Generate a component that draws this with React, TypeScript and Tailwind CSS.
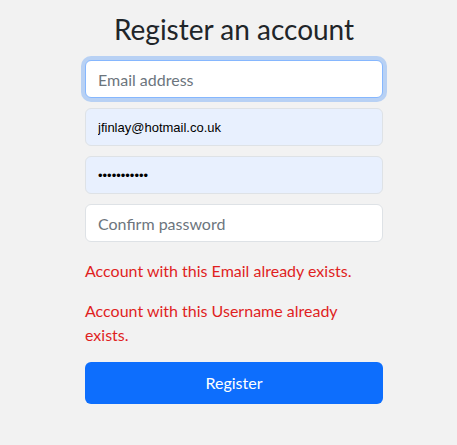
export default function App() {
  return (
    <div className="min-h-screen bg-[#f2f2f2] font-['Lato',sans-serif] text-[#212529]">
      <div className="ml-[85px] w-[298px] pt-[9px]">
        <h1 className="text-center text-[28px] leading-[40px] font-normal mb-[11px] -mx-4">Register an account</h1>
        <form className="flex flex-col gap-[10px]" onSubmit={(e) => e.preventDefault()}>
          <input
            type="email"
            placeholder="Email address"
            autoFocus
            className="h-[38px] w-full rounded-[6px] border border-[#86b7fe] bg-white px-3 text-[16px] shadow-[0_0_0_4px_rgba(13,110,253,0.25)] outline-none placeholder:text-[#6c757d]"
          />
          <input
            type="text"
            defaultValue="jfinlay@hotmail.co.uk"
            className="h-[38px] w-full rounded-[6px] border border-[#dee2e6] bg-[#e8f0fe] px-3 font-['Liberation_Sans',Arial,sans-serif] text-[13px] text-black outline-none"
          />
          <input
            type="password"
            defaultValue="abcdefghijk"
            className="h-[38px] w-full rounded-[6px] border border-[#dee2e6] bg-[#e8f0fe] px-3 font-['Liberation_Sans',Arial,sans-serif] text-[13px] text-black outline-none"
          />
          <input
            type="password"
            placeholder="Confirm password"
            className="h-[38px] w-full rounded-[6px] border border-[#dee2e6] bg-white px-3 text-[16px] outline-none placeholder:text-[#6c757d]"
          />
          <div className="mt-[7px] text-[16px] leading-[24px] text-[#e01f1f]">
            <p className="mb-[16px]">Account with this Email already exists.</p>
            <p>Account with this Username already exists.</p>
          </div>
          <button
            type="submit"
            className="mt-[5px] h-[42px] w-full rounded-[6px] bg-[#0d6efd] text-[16px] text-white"
          >
            Register
          </button>
        </form>
      </div>
    </div>
  )
}
